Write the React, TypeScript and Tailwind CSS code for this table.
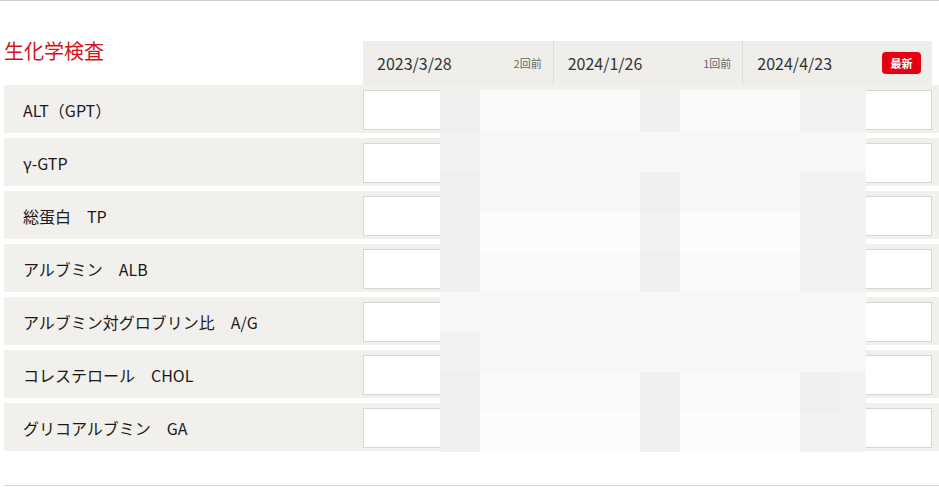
import React from "react";

const items = [
  "ALT（GPT）",
  "γ-GTP",
  "総蛋白　TP",
  "アルブミン　ALB",
  "アルブミン対グロブリン比　A/G",
  "コレステロール　CHOL",
  "グリコアルブミン　GA",
];

const dates = [
  { date: "2023/3/28", tag: "2回前" },
  { date: "2024/1/26", tag: "1回前" },
  { date: "2024/4/23", tag: "最新", latest: true },
];

// mosaic over the hidden values, 9 rows x 11 cols
const D = "bg-[#efefef]";
const M = "bg-[#f2f2f2]";
const L = "bg-[#f7f7f6]";
const W = "bg-[#fafafa]";
const X = "bg-[#fcfcfc]";
const mosaic = [
  [D, W, W, W, W, D, W, W, W, M, M],
  [M, L, L, L, L, L, L, L, L, L, L],
  [D, L, L, L, L, D, L, L, L, M, M],
  [D, X, X, X, X, M, X, X, X, M, M],
  [D, W, W, W, W, D, W, W, W, M, M],
  [L, L, L, L, L, L, L, L, L, L, L],
  [M, L, L, L, L, L, L, L, L, L, L],
  [D, W, W, W, W, D, W, W, W, D, M],
  [D, X, X, X, X, D, X, X, X, M, M],
];

function HeaderCell({ date, tag, latest, first }: { date: string; tag: string; latest?: boolean; first?: boolean }) {
  return (
    <div
      className={`w-[190px] h-full flex items-center justify-between pl-[14px] pr-[11px] ${
        first ? "" : "border-l border-[#dcdbd8]"
      }`}
    >
      <span className="text-[16px] text-[#333]">{date}</span>
      {latest ? (
        <span className="bg-[#e50012] text-white text-[11px] font-bold rounded-[4px] w-[39px] h-[22px] flex items-center justify-center">
          {tag}
        </span>
      ) : (
        <span className="text-[11px] text-[#666]">{tag}</span>
      )}
    </div>
  );
}

export default function App() {
  return (
    <div
      className="w-[939px] h-[487px] bg-white border-t border-[#cfcfcf] relative overflow-hidden"
      style={{ fontFamily: '"Noto Sans CJK JP", "Noto Sans", sans-serif' }}
    >
      <div className="pl-[4px] pt-[40px]">
        <div className="flex">
          <h2 className="w-[359px] text-[20px] leading-[24px] text-[#d3131b] -mt-[2px]">生化学検査</h2>
          <div className="flex h-[44px] w-[569px] bg-[#efeeeb]">
            {dates.map((d, i) => (
              <HeaderCell key={d.date} {...d} first={i === 0} />
            ))}
          </div>
        </div>
        <div className="flex flex-col gap-[5px]">
          {items.map((label) => (
            <div key={label} className="flex h-[48px] bg-[#f1f0ed]">
              <div className="w-[359px] pl-[19px] pt-[1px] flex items-center text-[16px] text-[#1a1a1a]">
                {label}
              </div>
              <div className="flex pt-[5px]">
                <div className="w-[190px] pr-[6px]">
                  <div className="h-[40px] bg-white border border-[#d6d6d3]" />
                </div>
                <div className="w-[190px] pr-[6px]">
                  <div className="h-[40px] bg-white border border-[#d6d6d3]" />
                </div>
                <div className="w-[189px] pl-[6px]">
                  <div className="h-[40px] bg-white border border-[#d6d6d3]" />
                </div>
              </div>
            </div>
          ))}
        </div>
        <div className="mt-[34px] border-t border-[#d4d4d4]" />
      </div>

      <div className="absolute left-[440px] top-[89px] w-[426px] grid grid-cols-[repeat(10,40px)_26px] grid-rows-[42px_repeat(8,40px)]">
        {mosaic.flatMap((row, r) => row.map((c, i) => <div key={`${r}-${i}`} className={c} />))}
      </div>
    </div>
  );
}
